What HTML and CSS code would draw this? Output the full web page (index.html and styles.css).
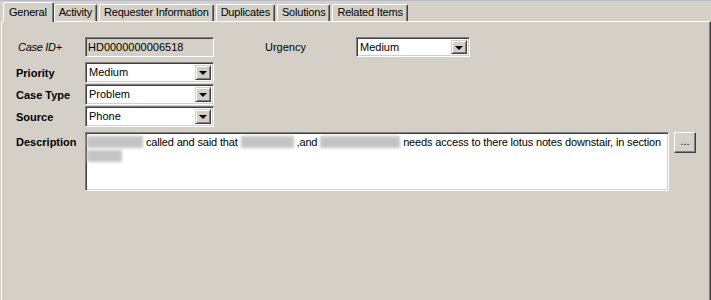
FILE: index.html
```html
<!DOCTYPE html>
<html>
<head>
<meta charset="utf-8">
<link rel="stylesheet" href="styles.css">
</head>
<body>
<div class="tabs">
  <div class="tab selected">General</div>
  <div class="tab">Activity</div>
  <div class="tab">Requester Information</div>
  <div class="tab">Duplicates</div>
  <div class="tab">Solutions</div>
  <div class="tab">Related Items</div>
</div>
<div class="panel">
  <div class="row r1">
    <div class="label italic">Case ID+</div>
    <div class="field disabled w129">HD0000000006518</div>
    <div class="label urg">Urgency</div>
    <div class="field select w114"><span class="val">Medium</span><span class="drop"><span class="arrow"></span></span></div>
  </div>
  <div class="row r2">
    <div class="label bold">Priority</div>
    <div class="field select w129"><span class="val">Medium</span><span class="drop"><span class="arrow"></span></span></div>
  </div>
  <div class="row r3">
    <div class="label bold">Case Type</div>
    <div class="field select w129"><span class="val">Problem</span><span class="drop"><span class="arrow"></span></span></div>
  </div>
  <div class="row r3">
    <div class="label bold">Source</div>
    <div class="field select w129"><span class="val">Phone</span><span class="drop"><span class="arrow"></span></span></div>
  </div>
  <div class="row desc">
    <div class="label bold dlabel">Description</div>
    <div class="field textarea"><span class="blur b1"></span> called and said that <span class="blur b2"></span> ,and <span class="blur b3"></span> needs access to there lotus notes downstair, in section <span class="blur b4"></span></div>
    <div class="btn">...</div>
  </div>
</div>
</body>
</html>
```
FILE: styles.css
```css
html, body {
  margin: 0;
  padding: 0;
}
body {
  background: #d4d0c8;
  font-family: "Liberation Sans", Arial, sans-serif;
  font-size: 11px;
  color: #000;
  width: 711px;
  height: 300px;
  overflow: hidden;
  box-sizing: border-box;
  padding-left: 1px;
  border-top: 1px solid #b9bcc6;
}
.tabs {
  display: flex;
  align-items: flex-end;
  height: 20px;
  padding-left: 3px;
  position: relative;
  z-index: 2;
  letter-spacing: -0.2px;
}
.tab {
  height: 17px;
  box-sizing: border-box;
  border-left: 1px solid #fff;
  border-top: 1px solid #fff;
  border-right: 1px solid #404040;
  box-shadow: inset -1px 0 #808080;
  border-radius: 2px 2px 0 0;
  padding: 1px 4px 0 4px;
  line-height: 13px;
  white-space: nowrap;
  margin-right: 2px;
}
.tab.selected {
  height: 20px;
  margin-bottom: -1px;
  margin-left: -1px;
  margin-right: 0;
  padding: 3px 6px 0 5px;
  background: #d4d0c8;
}
.panel {
  width: 710px;
  height: 279px;
  box-sizing: border-box;
  border-top: 1px solid #fff;
  border-left: 1px solid #fff;
  border-right: 1px solid #404040;
  box-shadow: inset -1px 0 #808080;
  padding: 15px 0 0 14px;
  position: relative;
  z-index: 1;
}
.row {
  display: flex;
  align-items: center;
}
.r1 { height: 20px; margin-bottom: 5px; }
.r2 { height: 21px; margin-bottom: 1px; }
.r3 { height: 21px; margin-bottom: 1px; }
.desc { align-items: flex-start; margin-top: 5px; }
.label {
  width: 69px;
  flex: none;
  white-space: nowrap;
}
.italic { font-style: italic; padding-left: 2px; box-sizing: border-box; letter-spacing: -0.3px; }
.bold { font-weight: bold; }
.urg { margin-left: 51px; width: 91px; }
.dlabel { padding-top: 4px; }
.field {
  box-sizing: border-box;
  height: 100%;
  border: 1px solid;
  border-color: #808080 #fff #fff #808080;
  box-shadow: inset 1px 1px #404040, inset -1px -1px #d4d0c8;
  background: #fff;
  flex: none;
}
.w129 { width: 129px; }
.w114 { width: 114px; }
.disabled {
  background: #d4d0c8;
  padding: 3px 0 0 2px;
  line-height: 13px;
}
.select {
  display: flex;
  align-items: stretch;
  padding: 2px;
}
.select .val {
  flex: 1;
  padding-left: 1px;
  line-height: 15px;
}
.drop {
  width: 16px;
  flex: none;
  box-sizing: border-box;
  background: #d4d0c8;
  border: 1px solid;
  border-color: #d4d0c8 #404040 #404040 #d4d0c8;
  box-shadow: inset 1px 1px #fff, inset -1px -1px #808080;
  display: flex;
  align-items: center;
  justify-content: center;
}
.arrow {
  width: 0;
  height: 0;
  border-left: 4px solid transparent;
  border-right: 4px solid transparent;
  border-top: 4px solid #000;
  margin-top: 1px;
}
.textarea {
  width: 584px;
  height: 59px;
  padding: 2px 3px 0 1px;
  line-height: 14px;
  letter-spacing: -0.15px;
}
.blur {
  display: inline-block;
  height: 12px;
  background: #c4c4c4;
  filter: blur(1.5px);
  vertical-align: -2px;
}
.b1 { width: 56px; }
.b2 { width: 53px; }
.b3 { width: 80px; }
.b4 { width: 35px; }
.btn {
  margin-left: 5px;
  width: 22px;
  height: 21px;
  box-sizing: border-box;
  border: 1px solid;
  border-color: #fff #404040 #404040 #fff;
  box-shadow: inset -1px -1px #808080;
  text-align: center;
  line-height: 17px;
  flex: none;
}
```
